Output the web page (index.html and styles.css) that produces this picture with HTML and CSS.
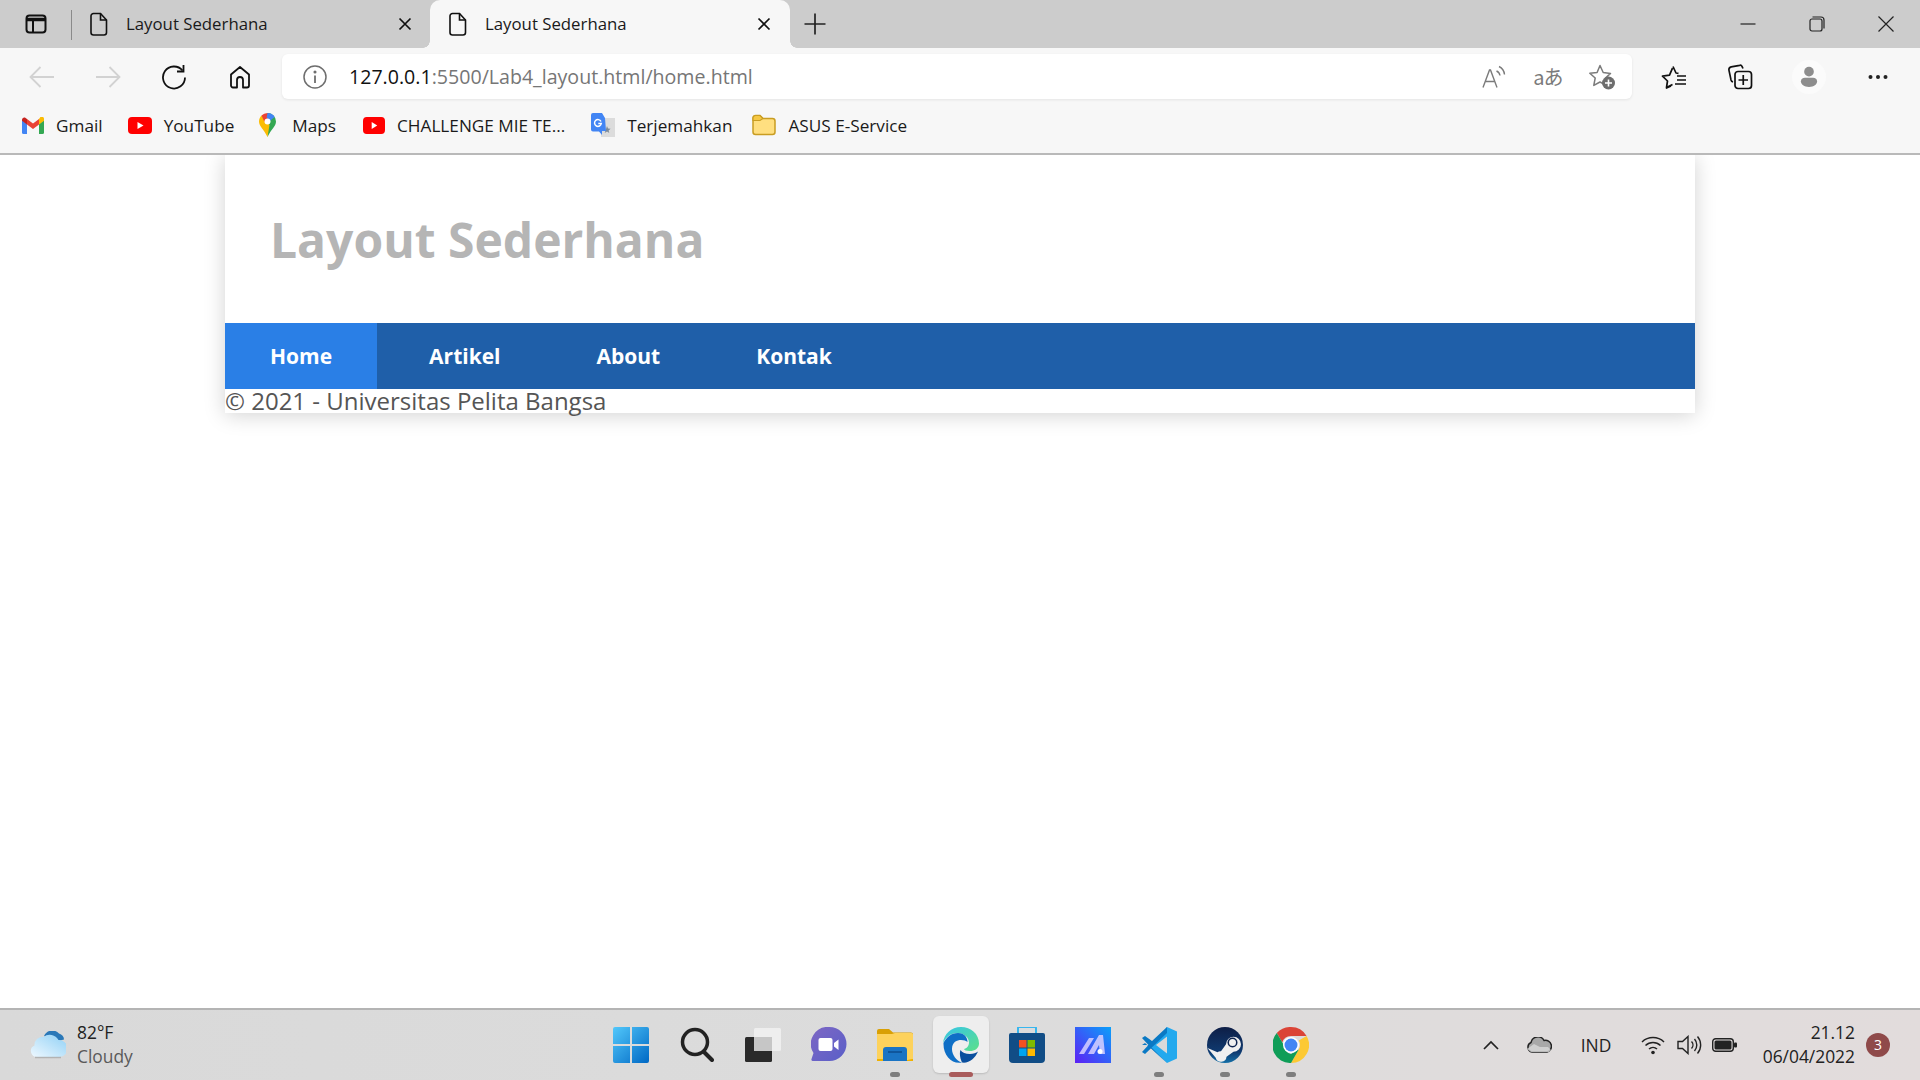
FILE: index.html
```html
<!DOCTYPE html>
<html>
<head>
    <title>Layout Sederhana</title>
    <link rel="stylesheet" href="styles.css">
</head>
<body>
    <div class="tabbar">
        <div class="sidebar-btn">
            <svg width="22" height="22" viewBox="0 0 22 22" fill="none" stroke="#111" stroke-width="2"><rect x="1.5" y="2.5" width="19" height="17" rx="3"/><path d="M1.5 6.5h19" stroke-width="3.5"/><path d="M8 7v12"/></svg>
        </div>
        <div class="tab-sep"></div>
        <div class="tab">
            <svg class="page-icon" width="18" height="24" viewBox="0 0 18 24" fill="none" stroke="#111" stroke-width="1.6"><path d="M3.5 1.5h7l6 6.5v12.5a2.5 2.5 0 0 1-2.5 2.5h-10.500a2.500 2.500 0 0 1-2.500-2.500v-16.500a2.500 2.500 0 0 1 2.500-2.500z"/><path d="M10.500 1.500v6.500h6"/></svg>
            <span class="tab-title">Layout Sederhana</span>
            <svg class="tab-close" width="14" height="14" viewBox="0 0 14 14" stroke="#111" stroke-width="1.700"><path d="M1.500 1.500l11 11M12.500 1.500l-11 11"/></svg>
        </div>
        <div class="tab tab-active">
            <svg class="page-icon" width="18" height="24" viewBox="0 0 18 24" fill="none" stroke="#111" stroke-width="1.6"><path d="M3.5 1.5h7l6 6.5v12.5a2.5 2.5 0 0 1-2.5 2.5h-10.500a2.500 2.500 0 0 1-2.500-2.500v-16.500a2.500 2.500 0 0 1 2.500-2.500z"/><path d="M10.500 1.500v6.500h6"/></svg>
            <span class="tab-title">Layout Sederhana</span>
            <svg class="tab-close" width="14" height="14" viewBox="0 0 14 14" stroke="#111" stroke-width="1.700"><path d="M1.500 1.500l11 11M12.500 1.500l-11 11"/></svg>
        </div>
        <div class="new-tab">
            <svg width="22" height="22" viewBox="0 0 22 22" stroke="#222" stroke-width="1.700"><path d="M11 0.500v21M0.500 11h21"/></svg>
        </div>
        <div class="win-controls">
            <div class="win-btn"><svg width="16" height="16" viewBox="0 0 16 16" stroke="#222" stroke-width="1.200"><path d="M0.500 8h15"/></svg></div>
            <div class="win-btn"><svg width="16" height="16" viewBox="0 0 16 16" fill="none" stroke="#222" stroke-width="1.200"><rect x="1" y="3" width="12" height="12" rx="2"/><path d="M3.500 1h8.500a3 3 0 0 1 3 3v8.500"/></svg></div>
            <div class="win-btn"><svg width="16" height="16" viewBox="0 0 16 16" stroke="#222" stroke-width="1.200"><path d="M0.500 0.500l15 15M15.500 0.500l-15 15"/></svg></div>
        </div>
    </div>

    <div class="toolbar">
        <div class="tool-btn"><svg width="26" height="24" viewBox="0 0 26 24" fill="none" stroke="#d2d2d2" stroke-width="1.800"><path d="M25 12h-23M11.500 2l-10 10 10 10"/></svg></div>
        <div class="tool-btn"><svg width="26" height="24" viewBox="0 0 26 24" fill="none" stroke="#d2d2d2" stroke-width="1.800"><path d="M1 12h23M14.500 2l10 10-10 10"/></svg></div>
        <div class="tool-btn"><svg width="26" height="26" viewBox="0 0 26 26" fill="none" stroke="#111" stroke-width="1.800"><path d="M21.500 6.500a11 11 0 1 0 2.500 7"/><path d="M22.500 1v6.500h-6.500"/></svg></div>
        <div class="tool-btn"><svg width="24" height="24" viewBox="0 0 24 24" fill="none" stroke="#111" stroke-width="1.800" stroke-linejoin="round"><path d="M3 9.500l9-7.500 9 7.500v11a2 2 0 0 1-2 2h-4v-7.500a3 3 0 0 0-6 0v7.500h-4a2 2 0 0 1-2-2z"/></svg></div>
        <div class="address">
            <svg class="info-icon" width="24" height="24" viewBox="0 0 24 24" fill="none" stroke="#6e6e6e" stroke-width="1.500"><circle cx="12" cy="12" r="11"/><path d="M12 10.500v7.500" stroke-width="1.800"/><circle cx="12" cy="7" r="0.800" fill="#6e6e6e"/></svg>
            <span class="url"><span class="url-host">127.0.0.1</span>:5500/Lab4_layout.html/home.html</span>
            <div class="address-icons">
                <div class="addr-icon"><svg width="24" height="24" viewBox="0 0 24 24" fill="none" stroke="#7b7b7b" stroke-width="1.400"><path d="M1 22.500l6.500-17.500h1l6.500 17.500M3.500 16.500h9"/><path d="M14.500 6a6 6 0 0 1 3.500 4.500M17 1.500a10 10 0 0 1 5.500 8"/></svg></div>
                <div class="addr-icon"><span class="aa-glyph">aあ</span></div>
                <div class="addr-icon"><svg width="28" height="26" viewBox="0 0 28 26" fill="none" stroke="#7b7b7b" stroke-width="1.500"><path d="M12 1.500l3.200 7 7.300 0.900-5.300 5 1 7-6.200-3.400-6.200 3.400 1.400-7.400-5.400-4.800 7.300-0.700z" stroke-linejoin="round"/><circle cx="20.500" cy="19" r="6.500" fill="#6e6e6e" stroke="none"/><path d="M20.500 15.500v7M17 19h7" stroke="#fff" stroke-width="1.600"/></svg></div>
            </div>
        </div>
        <div class="tool-btn tool-first"><svg width="26" height="24" viewBox="0 0 26 24" fill="none" stroke="#111" stroke-width="1.700" stroke-linejoin="round"><path d="M12 1.500l3 6.500 2.500 0.300M10 21l-4.500 2 1-7-5-4.800 7-1 3-7M6.500 16l-1 6.500 6-3"/><path d="M16 11h9M16 15h9M14 19h11"/></svg></div>
        <div class="tool-btn"><svg width="26" height="26" viewBox="0 0 26 26" fill="none" stroke="#111" stroke-width="1.700"><path d="M16 4.500l-1-2.200a2 2 0 0 0-2.300-1l-8.500 1.600a3 3 0 0 0-2.200 3.500l2 9.500a3 3 0 0 0 2 2"/><rect x="8" y="7.500" width="16.500" height="17" rx="3"/><path d="M16.250 11v10M11.500 16h9.500"/></svg></div>
        <div class="tool-btn tool-profile"><div class="avatar"><svg width="18" height="21" viewBox="0 0 22 26" fill="#8d8d8d"><circle cx="11" cy="7" r="6"/><path d="M1 19c0-3 2-4.500 5-4.500h10c3 0 5 1.500 5 4.500 0 4-4 7-10 7s-10-3-10-7z"/></svg></div></div>
        <div class="tool-btn"><svg width="20" height="6" viewBox="0 0 20 6" fill="#222"><circle cx="2.500" cy="3" r="2"/><circle cx="10" cy="3" r="2"/><circle cx="17.500" cy="3" r="2"/></svg></div>
    </div>

    <div class="bookmarks">
        <div class="bookmark bm-gmail">
            <svg width="22" height="17" viewBox="0 0 22 17"><path d="M0 3v12.500a1.500 1.500 0 0 0 1.500 1.500h3.500v-10z" fill="#4285f4"/><path d="M22 3v12.500a1.500 1.500 0 0 1-1.500 1.500h-3.500v-10z" fill="#34a853"/><path d="M17 2v5.500l5-3.800v-1.700c0-2-2.200-3-3.600-1.900z" fill="#fbbc04"/><path d="M5 7.500v-5.500l6 4.500 6-4.500v5.500l-6 4.500z" fill="#ea4335"/><path d="M0 2v1.700l5 3.800v-5.500l-1.400-1c-1.400-1.100-3.600-0.100-3.600 2z" fill="#c5221f"/></svg>
            <span>Gmail</span>
        </div>
        <div class="bookmark bm-yt">
            <svg width="24" height="17" viewBox="0 0 24 17"><rect width="24" height="17" rx="4" fill="#f00"/><path d="M9.500 5v7l6-3.500z" fill="#fff"/></svg>
            <span>YouTube</span>
        </div>
        <div class="bookmark bm-maps">
            <svg width="17" height="24" viewBox="0 0 17 24"><path d="M8.500 0a8.500 8.500 0 0 1 8.500 8.500c0 5-5 8-8.500 15.500z" fill="#34a853"/><path d="M8.500 24c-3.500-7.500-8.500-10.500-8.500-15.500 0-2.300 1-4.400 2.500-5.900l8 9.500z" fill="#fbbc04"/><path d="M2.500 2.600a8.500 8.500 0 0 1 6-2.600l4 3-5 4.500-2 1.500z" fill="#ea4335"/><path d="M8.500 0a8.500 8.500 0 0 1 7.200 4l-5 4-3-3.500z" fill="#4285f4"/><circle cx="8.500" cy="8.500" r="3" fill="#fff"/></svg>
            <span>Maps</span>
        </div>
        <div class="bookmark bm-yt2">
            <svg width="22" height="17" viewBox="0 0 24 17" preserveAspectRatio="none"><rect width="24" height="17" rx="4" fill="#f00"/><path d="M9.500 5v7l6-3.500z" fill="#fff"/></svg>
            <span>CHALLENGE MIE TE...</span>
        </div>
        <div class="bookmark bm-translate">
            <svg width="24" height="24" viewBox="0 0 24 24"><rect x="10" y="5" width="14" height="19" fill="#dcdcdc"/><path d="M16 13l1 2.500 2.600 0.200-2 1.700 0.700 2.600-2.300-1.400-2.300 1.400z" fill="#7c8a99"/><path d="M2 0h9l3 5 1 13h-4v4l-3-3.500h-6a2 2 0 0 1-2-2v-14.500a2 2 0 0 1 2-2z" fill="#4285f4"/><path d="M10 8.500a3.400 3.400 0 1 0 0.300 2h-3" fill="none" stroke="#fff" stroke-width="1.500"/></svg>
            <span>Terjemahkan</span>
        </div>
        <div class="bookmark bm-folder">
            <svg width="24" height="22" viewBox="0 0 24 22"><path d="M1 4a2.500 2.500 0 0 1 2.500-2.500h4.500l3 3h9.500a2.500 2.500 0 0 1 2.500 2.500v11a2.500 2.500 0 0 1-2.500 2.500h-17a2.500 2.500 0 0 1-2.500-2.500z" fill="#ffdf80" stroke="#c99d22" stroke-width="1.500"/><path d="M1 4a2.500 2.500 0 0 1 2.500-2.500h4.500l3 3-3 2h-7z" fill="#f6c844" stroke="#c99d22" stroke-width="1.200"/></svg>
            <span>ASUS E-Service</span>
        </div>
    </div>

    <div class="page">
        <div class="container">
            <header class="site-header">
                <h1>Layout Sederhana</h1>
            </header>
            <nav class="site-nav">
                <a class="nav-link active" href="#">Home</a>
                <a class="nav-link" href="#">Artikel</a>
                <a class="nav-link" href="#">About</a>
                <a class="nav-link" href="#">Kontak</a>
            </nav>
            <footer class="site-footer">&copy; 2021 - Universitas Pelita Bangsa</footer>
        </div>
    </div>

    <div class="taskbar">
        <div class="weather">
            <svg width="36" height="28" viewBox="0 0 36 28"><defs><linearGradient id="cloud" x1="0" y1="1" x2="1" y2="0"><stop offset="0" stop-color="#eef8ff"/><stop offset="1" stop-color="#8fd0f5"/></linearGradient></defs><path d="M14 5a9 9 0 0 1 15-2.500c3 1 5 3 5 6l-8 2z" fill="#2a78b8"/><path d="M7 26a6 6 0 0 1-2.500-11.500 8 8 0 0 1 9-8.500 10 10 0 0 1 15 3 8.500 8.500 0 0 1 1 17z" fill="url(#cloud)"/><path d="M5 26.500h26" stroke="#9a9a9a" stroke-width="1.500" opacity="0.600"/></svg>
            <div class="weather-text">
                <div class="temp">82°F</div>
                <div class="cond">Cloudy</div>
            </div>
        </div>
        <div class="apps">
            <div class="app">
                <svg width="36" height="36" viewBox="0 0 36 36"><defs><linearGradient id="win" x1="0" y1="0" x2="1" y2="1"><stop offset="0" stop-color="#52c8fb"/><stop offset="1" stop-color="#0068c4"/></linearGradient></defs><path d="M2 0h15v17h-17v-15a2 2 0 0 1 2-2zM19 0h15a2 2 0 0 1 2 2v15h-17zM0 19h17v17h-15a2 2 0 0 1-2-2zM19 19h17v15a2 2 0 0 1-2 2h-15z" fill="url(#win)"/></svg>
            </div>
            <div class="app">
                <svg width="34" height="36" viewBox="0 0 34 36" fill="none" stroke="#222" stroke-width="3.500"><circle cx="15" cy="15" r="12.500"/><path d="M24 25l8 8" stroke-linecap="round" stroke-width="4"/></svg>
            </div>
            <div class="app">
                <svg width="36" height="34" viewBox="0 0 36 34"><rect x="0" y="9" width="27" height="25" rx="1.500" fill="#2a2a2a"/><rect x="9" y="0" width="27" height="23" rx="1.500" fill="#f2f2f2" opacity="0.800"/><rect x="9" y="9" width="18" height="14" fill="#c6c6c6"/></svg>
            </div>
            <div class="app">
                <svg width="36" height="36" viewBox="0 0 36 36"><defs><linearGradient id="chat" x1="0" y1="0" x2="1" y2="1"><stop offset="0" stop-color="#7d67c4"/><stop offset="1" stop-color="#5a5fc8"/></linearGradient></defs><path d="M18.500 0a17 17 0 1 1 0 34h-16c-1.500 0-2.500-0.500-2-2l2-6a17 17 0 0 1 16-26z" fill="url(#chat)"/><rect x="7.500" y="11" width="14" height="13" rx="2" fill="#fff"/><path d="M23 16l4.500-3.500v10.500l-4.500-3.500z" fill="#fff"/></svg>
            </div>
            <div class="app app-open">
                <svg width="36" height="32" viewBox="0 0 36 32"><path d="M0 2a2 2 0 0 1 2-2h10l4 3.500h18a2 2 0 0 1 2 2v4h-36z" fill="#d9a005"/><path d="M0 5h15l3-1h16.500a1.500 1.500 0 0 1 1.500 1.500v25a1.500 1.500 0 0 1-1.500 1.500h-33a1.500 1.500 0 0 1-1.500-1.500z" fill="#fdd25c"/><path d="M35 30h1v2h-10zM0 30h8v2h-8z" fill="#f0b100"/><path d="M6 21a3 3 0 0 1 3-3h18a3 3 0 0 1 3 3v11h-24z" fill="#1a74c4"/><path d="M11 23h14" stroke="#0d4f92" stroke-width="1.600"/></svg>
            </div>
            <div class="app app-active">
                <svg width="36" height="36" viewBox="0 0 36 36"><defs><linearGradient id="edgeg" x1="0" y1="0" x2="1" y2="1"><stop offset="0" stop-color="#36c5e8"/><stop offset="1" stop-color="#5ce089"/></linearGradient></defs><path d="M18 0c10 0 18 7 18 16.500 0 5-4.500 7.500-9 7.500-3.500 0-6-1-6-2 2.500-0.500 5-3 5-6.500 0-5-5-9.500-11.500-9.500-6.500 0-11.500 4-14.500 10 1-9 8-16 18-16z" fill="url(#edgeg)"/><path d="M0.500 16c3-6 8-10 14.500-10 6.500 0 9.500 4.500 9.500 9-3-3-15-4-15.500 6.500-0.200 6 4 12 10 14-10 2-19-7-18.500-19.500z" fill="#0f6fc6"/><path d="M19 35.500c7 1 13-4 16-11-2 1.500-4.500 2.500-8 2.500-4.500 0-8-1.500-9.500-4-1.500 4 0 9 1.500 12.500z" fill="#0a4f9e"/></svg>
            </div>
            <div class="app">
                <svg width="36" height="36" viewBox="0 0 36 36"><path d="M9 6v-5a1 1 0 0 1 1-1h16a1 1 0 0 1 1 1v5" fill="none" stroke="#38b6ee" stroke-width="2"/><path d="M2 6h32a2 2 0 0 1 2 2v24a4 4 0 0 1-4 4h-28a4 4 0 0 1-4-4v-24a2 2 0 0 1 2-2z" fill="#114d86"/><rect x="10" y="13" width="7.500" height="7.500" fill="#f25022"/><rect x="18.500" y="13" width="7.500" height="7.500" fill="#7fba00"/><rect x="10" y="21.500" width="7.500" height="7.500" fill="#00a4ef"/><rect x="18.500" y="21.500" width="7.500" height="7.500" fill="#ffb900"/></svg>
            </div>
            <div class="app">
                <svg width="36" height="36" viewBox="0 0 36 36"><defs><linearGradient id="bluegrad" x1="0" y1="1" x2="1" y2="0"><stop offset="0" stop-color="#5d20f5"/><stop offset="1" stop-color="#0aa0fa"/></linearGradient></defs><rect width="36" height="36" fill="url(#bluegrad)"/><path d="M4 27l10-16h5l-10 16zM13 27l11-19h4l2 19h-5l-1-9-5 9z" fill="#d8d0ff" opacity="0.850"/><circle cx="25" cy="24.500" r="2.500" fill="#fff"/></svg>
            </div>
            <div class="app app-open">
                <svg width="36" height="36" viewBox="0 0 36 36"><path d="M26 0l10 4.500v27l-10 4.500-16-15z" fill="#23a9ee"/><path d="M26 0l-15 14-7-5-3 2 6.500 7-6.500 7 3 2 22-21z" fill="#0a79c4"/><path d="M26 36l-22-20-3 2 7 0 18 18z" fill="#0a79c4"/><path d="M26 9.500v17l-11-8.500z" fill="#d9d9d9"/></svg>
            </div>
            <div class="app app-open">
                <svg width="36" height="36" viewBox="0 0 36 36"><defs><linearGradient id="steamg" x1="0" y1="0" x2="0" y2="1"><stop offset="0" stop-color="#0e1e46"/><stop offset="0.700" stop-color="#0f3a70"/><stop offset="1" stop-color="#1570a8"/></linearGradient></defs><circle cx="18" cy="18" r="18" fill="url(#steamg)"/><path d="M0.500 21l10 4.200a5 5 0 0 1 3.500-1l5-7a7.500 7.500 0 1 1 7.500 7.500l-7 5a5.500 5.500 0 0 1-10.800 1z" fill="#f0f0f0"/><circle cx="25.500" cy="15.500" r="5" fill="#0e2450"/><circle cx="25.500" cy="15.500" r="3.500" fill="#f0f0f0"/></svg>
            </div>
            <div class="app app-open">
                <svg width="36" height="36" viewBox="0 0 36 36"><path d="M18 0a18 18 0 0 1 15.600 9h-15.600a9 9 0 0 0-8.700 6.600l-5.500-9.500a18 18 0 0 1 14.200-6.100z" fill="#db4437"/><path d="M33.600 9a18 18 0 0 1-15.600 27l7.800-13.500a9 9 0 0 0 0-9z" fill="#fcc934"/><path d="M18 36a18 18 0 0 1-14.200-29.900l7.900 13.500a8 8 0 0 0 6.300 7.400l0 0 7.800-4.500z" fill="#0f9d58"/><circle cx="18" cy="18" r="8" fill="#fff"/><circle cx="18" cy="18" r="6.500" fill="#4285f4"/></svg>
            </div>
        </div>
        <div class="tray">
            <div class="tray-item tray-chevron"><svg width="16" height="10" viewBox="0 0 16 10" fill="none" stroke="#222" stroke-width="1.700"><path d="M1 9l7-7 7 7"/></svg></div>
            <div class="tray-item tray-cloud"><svg width="26" height="16" viewBox="0 0 26 16"><path d="M6 15a5 5 0 0 1-1-9.500 7 7 0 0 1 13-2 5.500 5.500 0 0 1 3 11.500z" fill="#a8a8a8" stroke="#222" stroke-width="1.500"/><path d="M1 12l7-5 6 3 8 0 3 3-2 2h-18z" fill="#d8d8d8" opacity="0.800"/></svg></div>
            <div class="tray-item tray-lang">IND</div>
            <div class="tray-item tray-wifi"><svg width="24" height="20" viewBox="0 0 24 20" fill="none" stroke="#222" stroke-width="1.500"><path d="M1 7a16 16 0 0 1 22 0M4.500 10.500a11 11 0 0 1 15 0M8 14a6 6 0 0 1 8 0"/><circle cx="12" cy="17.500" r="1.800" fill="#222" stroke="none"/></svg></div>
            <div class="tray-item tray-sound"><svg width="25" height="20" viewBox="0 0 25 20" fill="none" stroke="#222" stroke-width="1.400"><path d="M1 6.500h4.500l5.500-5v17l-5.500-5h-4.500z"/><path d="M14.500 6.500a5 5 0 0 1 0 7M17.500 4a9 9 0 0 1 0 12M20.500 1.500a13 13 0 0 1 0 17"/></svg></div>
            <div class="tray-item tray-battery"><svg width="25" height="14" viewBox="0 0 25 14"><rect x="0.700" y="0.700" width="20.600" height="12.600" rx="3" fill="none" stroke="#222" stroke-width="1.400"/><rect x="2.500" y="2.500" width="17" height="9" rx="1.500" fill="#222"/><rect x="22" y="4.500" width="3" height="5" rx="1" fill="#222"/></svg></div>
            <div class="clock">
                <div>21.12</div>
                <div>06/04/2022</div>
            </div>
            <div class="badge">3</div>
        </div>
    </div>
</body>
</html>
```

FILE: styles.css
```css
html,
body {
    height: 100%;
}

body {
    margin: 0;
    display: flex;
    flex-direction: column;
    font-family: "Open Sans", Arial, sans-serif;
    background: #fff;
    overflow: hidden;
}

svg {
    display: block;
    flex: none;
}

/* browser tabs */
.tabbar {
    height: 48px;
    display: flex;
    align-items: stretch;
    background: #cccccc;
}

.sidebar-btn {
    width: 71px;
    display: flex;
    align-items: center;
    justify-content: center;
}

.tab-sep {
    width: 1px;
    height: 30px;
    margin-top: 10px;
    background: #8a8a8a;
}

.tab {
    width: 358px;
    display: flex;
    align-items: center;
    padding-left: 18px;
    box-sizing: border-box;
    font-size: 16.800px;
    color: #1a1a1a;
}

.tab-active {
    position: relative;
    width: 360px;
    padding-left: 19px;
    background: #f7f7f7;
    border-radius: 10px 10px 0 0;
}

/* little curved corners where the active tab meets the toolbar */
.tab-active::before,
.tab-active::after {
    content: "";
    position: absolute;
    bottom: 0;
    width: 7px;
    height: 7px;
}

.tab-active::before {
    left: -7px;
    background: radial-gradient(circle at 0 0, #cccccc 6.500px, #f7f7f7 7px);
}

.tab-active::after {
    right: -7px;
    background: radial-gradient(circle at 100% 0, #cccccc 6.500px, #f7f7f7 7px);
}

.tab-title {
    width: 268px;
    margin-bottom: 2px;
    padding-left: 18px;
    white-space: nowrap;
}

.tab-close {
    margin-left: 4px;
}

.new-tab {
    width: 50px;
    display: flex;
    align-items: center;
    justify-content: center;
}

.win-controls {
    margin-left: auto;
    display: flex;
}

.win-btn {
    width: 69px;
    display: flex;
    align-items: center;
    justify-content: center;
}

/* address bar row */
.toolbar {
    height: 57px;
    display: flex;
    align-items: center;
    padding-left: 9px;
    background: #f7f7f7;
}

.tool-btn {
    width: 66px;
    height: 45px;
    display: flex;
    align-items: center;
    justify-content: center;
}

.tool-first {
    margin-left: 9px;
}

.tool-profile {
    margin: 0 3px;
}

.avatar {
    width: 34px;
    height: 34px;
    display: flex;
    align-items: center;
    justify-content: center;
    border-radius: 50%;
    background: #fbfbfb;
}

.address {
    width: 1350px;
    height: 45px;
    margin-left: 9px;
    display: flex;
    align-items: center;
    padding-left: 21px;
    box-sizing: border-box;
    background: #fff;
    border-radius: 6px;
    box-shadow: 0 1px 3px rgba(0, 0, 0, 0.08);
}

.url {
    margin-left: 22px;
    font-size: 19.600px;
    color: #767676;
    white-space: nowrap;
}

.url-host {
    color: #111;
}

.address-icons {
    margin-left: auto;
    padding-right: 3px;
    display: flex;
}

.addr-icon {
    width: 54px;
    height: 45px;
    display: flex;
    align-items: center;
    justify-content: center;
}

.aa-glyph {
    font-family: "Noto Sans CJK JP", "Open Sans", sans-serif;
    font-size: 20px;
    color: #7b7b7b;
    letter-spacing: -1px;
}

/* bookmarks */
.bookmarks {
    height: 40px;
    padding-bottom: 8px;
    display: flex;
    align-items: center;
    background: #f7f7f7;
    border-bottom: 2px solid #b9b9b9;
    font-size: 17.200px;
    color: #1a1a1a;
}

.bookmark {
    display: flex;
    align-items: center;
    gap: 12px;
    white-space: nowrap;
}

.bm-gmail {
    margin-left: 22px;
}

.bm-yt {
    margin-left: 25px;
}

.bm-maps {
    margin-left: 25px;
    gap: 16px;
}

.bm-yt2 {
    margin-left: 27px;
}

.bm-translate {
    margin-left: 26px;
}

.bm-folder {
    margin-left: 20px;
}

/* the page itself */
.page {
    flex: 1;
    overflow: hidden;
    background: #fff;
}

.container {
    width: 1470px;
    margin: 0 auto;
    background: #fff;
    box-shadow: 0 2px 20px rgba(0, 0, 0, 0.18);
}

.site-header {
    height: 168px;
    display: flex;
    align-items: center;
    padding-left: 45px;
}

.site-header h1 {
    margin: 0;
    font-size: 48px;
    font-weight: 700;
    color: #b5b5b5;
}

.site-nav {
    height: 66px;
    display: flex;
    background: #1f5fa9;
}

.nav-link {
    display: flex;
    align-items: center;
    padding: 0 48px;
    font-size: 21px;
    font-weight: 700;
    color: #fff;
    text-decoration: none;
}

.nav-link.active {
    padding: 0 45px;
    margin-right: 4px;
    background: #2a7fe6;
}

.site-footer {
    height: 24px;
    font-size: 24px;
    line-height: 24px;
    color: #555;
    white-space: nowrap;
}

/* windows taskbar */
.taskbar {
    height: 70px;
    display: grid;
    grid-template-columns: 598px 726px 1fr;
    align-items: center;
    border-top: 2px solid #b4b4b4;
    background: linear-gradient(90deg, #d9d9d9, #dcdcdc 50%, #e2dcdc);
}

.weather {
    display: flex;
    align-items: center;
    gap: 11px;
    padding-left: 30px;
    font-size: 17.400px;
    line-height: 24px;
}

.weather-text,
.clock {
    margin-top: -2px;
}

.temp {
    color: #222;
}

.cond {
    color: #5a5a5a;
}

.apps {
    display: flex;
}

.app {
    position: relative;
    width: 66px;
    height: 70px;
    display: flex;
    align-items: center;
    justify-content: center;
    box-sizing: border-box;
}

.app-open::after,
.app-active::after {
    content: "";
    position: absolute;
    left: 28px;
    bottom: 3px;
    width: 10px;
    height: 5px;
    border-radius: 3px;
    background: #7e7e7e;
}

.app-active::before {
    content: "";
    position: absolute;
    left: 5px;
    top: 6px;
    width: 56px;
    height: 57px;
    border-radius: 6px;
    background: #eeeeee;
    box-shadow: 0 1px 2px rgba(0, 0, 0, 0.15);
}

.app-active svg {
    position: relative;
}

.app-active::after {
    left: 21px;
    width: 24px;
    background: #a95c5c;
}

.tray {
    display: flex;
    align-items: center;
    padding-left: 145px;
    font-size: 17.400px;
    color: #222;
}

.tray-item {
    height: 30px;
    display: flex;
    align-items: center;
    justify-content: center;
}

.tray-chevron {
    width: 44px;
}

.tray-cloud {
    width: 52px;
}

.tray-lang {
    width: 62px;
}

.tray-wifi {
    width: 36px;
    margin-left: 8px;
}

.tray-sound {
    width: 36px;
}

.tray-battery {
    width: 34px;
}

.clock {
    width: 114px;
    text-align: right;
    line-height: 24px;
}

.badge {
    width: 24px;
    height: 24px;
    margin-left: 11px;
    border-radius: 50%;
    background: #8f4a4a;
    color: #fff;
    font-size: 14px;
    line-height: 24px;
    text-align: center;
}
```
